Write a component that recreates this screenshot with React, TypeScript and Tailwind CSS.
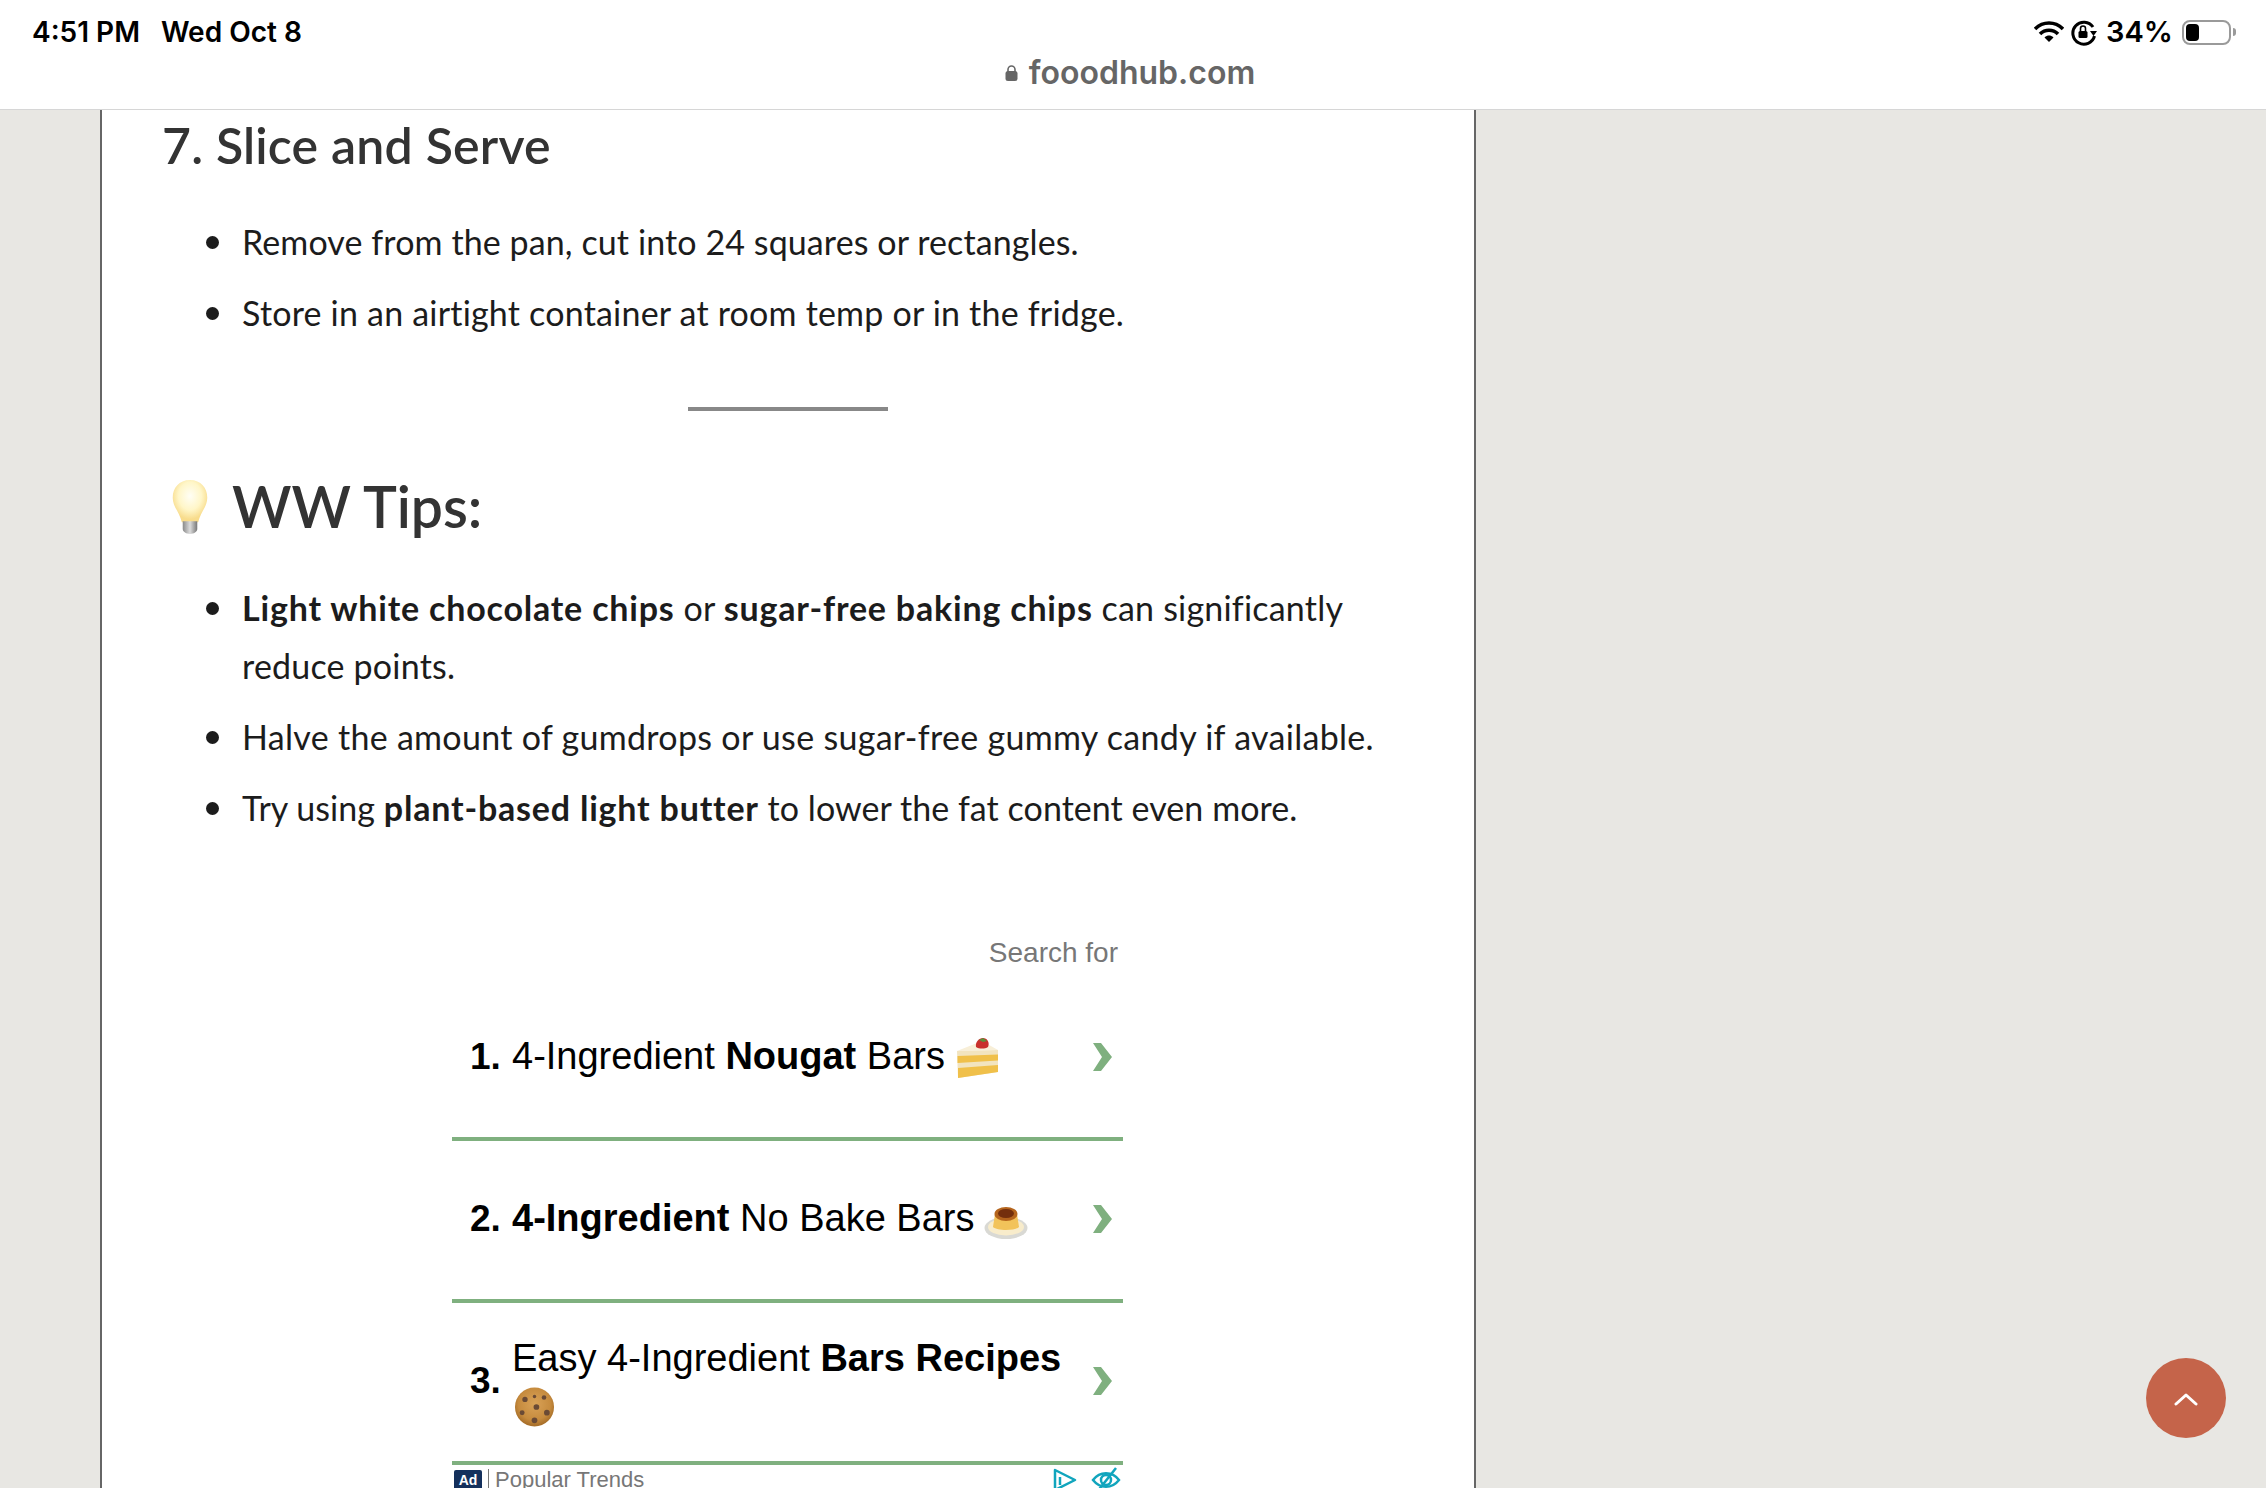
const bodyFont = "font-['Lato','Noto_Sans',sans-serif]";

// --- emoji drawings (no emoji font in the sandbox) ---
const Bulb = () => (
  <svg width="40" height="55" viewBox="0 0 44 56" preserveAspectRatio="none" className="shrink-0">
    <defs>
      <radialGradient id="glow" cx="50%" cy="38%" r="55%">
        <stop offset="0%" stopColor="#fffef5" />
        <stop offset="60%" stopColor="#fff6c8" />
        <stop offset="100%" stopColor="#f8dc8c" />
      </radialGradient>
      <linearGradient id="screw" x1="0" x2="1" y1="0" y2="0">
        <stop offset="0%" stopColor="#8a8a8a" />
        <stop offset="50%" stopColor="#dcdcdc" />
        <stop offset="100%" stopColor="#777" />
      </linearGradient>
    </defs>
    <path d="M22 1C10 1 3 9 3 19c0 9 7 14 10 25h18c3-11 10-16 10-25C41 9 34 1 22 1z" fill="url(#glow)" />
    <path d="M14 43h16v8c0 3-4 5-8 5s-8-2-8-5z" fill="url(#screw)" />
  </svg>
);

const Cake = () => (
  <svg width="44" height="40" viewBox="0 0 44 40">
    <path d="M2 13 27 3l16 9z" fill="#f8efd8" />
    <path d="M2 13 43 12v22L3 40z" fill="#f2e4bf" />
    <path d="M2.500 18 43 16.500v6L2.500 25z" fill="#f0c04a" />
    <path d="M3 30 43 27v7L3 40z" fill="#f0c04a" />
    <path d="M21 9c-1-5 3-9 7-9s7 4 5 9c-3 2-9 2-12 0z" fill="#c9302c" />
    <path d="M24 2l4-2 4 3-4 1z" fill="#5b8f3a" />
  </svg>
);

const Flan = () => (
  <svg width="44" height="32" viewBox="0 0 44 32">
    <ellipse cx="22" cy="21" rx="21.500" ry="11" fill="#d9d9d4" />
    <ellipse cx="22" cy="20" rx="18" ry="8.500" fill="#f8eccb" />
    <path d="M11 7h22l2 13c-4 4-22 4-26 0z" fill="#f2c35a" />
    <ellipse cx="22" cy="7" rx="11.500" ry="7" fill="#b5651d" />
    <ellipse cx="22" cy="6.500" rx="8" ry="4.500" fill="#742f0d" />
  </svg>
);

const Cookie = () => (
  <svg width="41" height="40" viewBox="0 0 42 42">
    <defs>
      <radialGradient id="dough" cx="50%" cy="42%" r="55%">
        <stop offset="0%" stopColor="#d9a257" />
        <stop offset="75%" stopColor="#c68b3e" />
        <stop offset="100%" stopColor="#a9702a" />
      </radialGradient>
    </defs>
    <circle cx="21" cy="21" r="20.500" fill="url(#dough)" />
    <g fill="#6a4a35">
      <circle cx="11" cy="13" r="2.800" />
      <circle cx="31" cy="11" r="2.400" />
      <circle cx="21" cy="10" r="1.800" />
      <circle cx="23" cy="21" r="3" />
      <circle cx="8" cy="27" r="2.600" />
      <circle cx="34" cy="27" r="3" />
      <circle cx="21" cy="35" r="3" />
    </g>
  </svg>
);

const Chevron = () => (
  <svg width="19" height="28" viewBox="0 0 19 28" className="shrink-0">
    <polygon points="0,0 8,0 19,14 8,28 0,28 9,14" fill="#7fb07f" />
  </svg>
);

const Row = ({ n, children }: { n: number; children: React.ReactNode }) => (
  <div className="flex items-center pl-[18px] pr-[11px] h-[155px] pb-[3px] border-b-4 border-[#7fb07f] box-content">
    <span className="font-bold text-[37px] w-[42px] shrink-0">{n}.</span>
    <div className="flex-1 text-[38px] leading-[47px] text-black">{children}</div>
    <Chevron />
  </div>
);

// マーカーのサイズを揃えるため、丸は自前で描く
const Bullet = ({ children, last, className }: { children: React.ReactNode; last?: boolean; className?: string }) => (
  <li className={`flex ${last ? "" : "mb-[13px]"} ${className ?? ""}`}>
    <span className="mt-[23px] mr-[23px] w-[13px] h-[13px] rounded-full bg-[#1c1c1c] shrink-0" />
    <span>{children}</span>
  </li>
);

const Strong = ({ children }: { children: React.ReactNode }) => (
  <b className="tracking-[0.8px]">{children}</b>
);

export default function App() {
  return (
    <div className="relative h-[1488px] overflow-hidden bg-[#e8e7e3]">
      {/* ステータスバー + URL */}
      <header className="relative h-[110px] bg-white border-b border-[#d6d6d6] font-['Inter',sans-serif]">
        <div className="flex items-start justify-between pt-[15px] pl-[32px] pr-[30px]">
          <div className="flex gap-[21px] text-[28px] font-semibold leading-[34px] text-black">
            <span>4:51 PM</span>
            <span>Wed Oct 8</span>
          </div>
          <div className="flex items-center gap-[9px]">
            <svg width="30" height="22" viewBox="0 0 30 22" className="mr-[-3px]">
              <path d="M1 8c8-8 20-8 28 0M6 13c5-5 13-5 18 0" fill="none" stroke="#000" strokeWidth="3.600" />
              <path d="M10.500 16.500c3-2.600 6-2.600 9 0L15 21z" fill="#000" />
            </svg>
            <svg width="27" height="27" viewBox="0 0 27 27">
              <path d="M23 8a11 11 0 1 0 1.500 9" fill="none" stroke="#000" strokeWidth="3" />
              <path d="M20 12h7l-3.500 5z" fill="#000" />
              <rect x="8.500" y="12" width="9" height="7" rx="1.500" fill="#000" />
              <path d="M10.500 12V9.500a2.500 2.500 0 0 1 5 0V12" fill="none" stroke="#000" strokeWidth="1.600" />
            </svg>
            <span className="text-[29px] font-semibold leading-[34px] text-black">34%</span>
            <div className="flex items-center gap-[2px]">
              <div className="w-[49px] h-[25px] rounded-[8px] border-2 border-[#9a9a9a] p-[2px]">
                <div className="w-[13px] h-full rounded-[4px] bg-black" />
              </div>
              <div className="w-[3px] h-[8px] rounded-r-full bg-[#9a9a9a]" />
            </div>
          </div>
        </div>
        <div className="absolute left-0 right-[6px] top-[54px] flex justify-center items-center gap-[11px] text-[32px] font-semibold leading-[38px] text-[#666]">
          <svg width="13" height="16" viewBox="0 0 13 16">
            <path d="M3 7V4.500a3.500 3.500 0 0 1 7 0V7" fill="none" stroke="#666" strokeWidth="1.600" />
            <rect x="0.500" y="6" width="12" height="10" rx="2.500" fill="#666" />
          </svg>
          <span>fooodhub.com</span>
        </div>
      </header>

      {/* 記事本文 */}
      <main className={`ml-[100px] w-[1376px] h-[1378px] bg-white border-x-2 border-[#666] pl-[60px] ${bodyFont}`}>
        <h3 className="pt-[6px] text-[50px] leading-[58px] font-semibold tracking-[0.2px] text-[#333]">7. Slice and Serve</h3>

        <ul className="mt-[39px] ml-[44px] text-[34px] leading-[58px] tracking-[0.2px] text-[#1c1c1c]">
          <Bullet className="tracking-[0.1px]">Remove from the pan, cut into 24 squares or rectangles.</Bullet>
          <Bullet last>Store in an airtight container at room temp or in the fridge.</Bullet>
        </ul>

        <div className="mt-[65px] ml-[526px] w-[200px] h-[4px] bg-[#888]" />

        <h2 className="mt-[60px] flex items-center gap-[22px] pl-[8px] text-[57px] leading-[70px] font-semibold text-[#333]">
          <Bulb />
          <span>WW Tips:</span>
        </h2>

        <ul className="mt-[38px] ml-[44px] w-[1180px] text-[34px] leading-[58px] tracking-[0.2px] text-[#1c1c1c]">
          <Bullet>
            <Strong>Light white chocolate chips</Strong> or <Strong>sugar-free baking chips</Strong> can significantly
            reduce points.
          </Bullet>
          <Bullet className="tracking-[0.3px]">Halve the amount of gumdrops or use sugar-free gummy candy if available.</Bullet>
          <Bullet last className="tracking-[0.05px]">
            Try using <Strong>plant-based light butter</Strong> to lower the fat content even more.
          </Bullet>
        </ul>

        {/* 広告ブロック */}
        <div className="mt-[99px] ml-[290px] w-[671px] font-['Liberation_Sans',Arial,sans-serif]">
          <p className="pb-[9px] pr-[5px] text-right text-[28px] leading-[34px] text-[#777]">Search for</p>
          <Row n={1}>
            <span className="inline-flex items-center gap-[10px]">
              <span>
                4-Ingredient <b>Nougat</b> Bars
              </span>
              <span className="mt-[2px]">
                <Cake />
              </span>
            </span>
          </Row>
          <Row n={2}>
            <span className="inline-flex items-center gap-[10px]">
              <span>
                <b>4-Ingredient</b> No Bake Bars
              </span>
              <span className="mt-[8px]">
                <Flan />
              </span>
            </span>
          </Row>
          <Row n={3}>
            <div className="mb-[5px]">
              Easy 4-Ingredient <b>Bars Recipes</b>
            </div>
            <div className="ml-[2px]">
              <Cookie />
            </div>
          </Row>
          <div className="flex items-center justify-between pl-[2px] pr-[2px] pt-[2px]">
            <div className="flex items-center gap-[6px] text-[22px] leading-[24px] text-[#777]">
              <span className="w-[28px] h-[20px] rounded-[2px] bg-[#14305c] text-white text-[14px] font-bold leading-[20px] text-center">
                Ad
              </span>
              <span className="w-px h-[22px] bg-[#777]" />
              <span>Popular Trends</span>
            </div>
            <div className="flex items-center gap-[14px]">
              <svg width="24" height="24" viewBox="0 0 24 24">
                <path d="M2 2l20 10L2 22z" fill="none" stroke="#11a5bd" strokeWidth="2.500" strokeLinejoin="round" />
                <path d="M7 9v8" stroke="#11a5bd" strokeWidth="2.500" />
              </svg>
              <svg width="30" height="26" viewBox="0 0 30 26">
                <path d="M2 13c7-9 19-9 26 0-7 9-19 9-26 0z" fill="none" stroke="#11a5bd" strokeWidth="2.500" />
                <circle cx="15" cy="13" r="5" fill="none" stroke="#11a5bd" strokeWidth="2.500" />
                <path d="M25 1 6 25" stroke="#11a5bd" strokeWidth="2.500" />
              </svg>
            </div>
          </div>
        </div>
      </main>

      {/* トップへ戻るボタン */}
      <button className="absolute left-[2146px] top-[1358px] w-[80px] h-[80px] rounded-full bg-[#c5644a] flex items-center justify-center">
        <svg width="24" height="14" viewBox="0 0 24 14" className="mt-[2px]">
          <path d="M2 12 12 3l10 9" fill="none" stroke="#fff" strokeWidth="3" strokeLinecap="round" strokeLinejoin="round" />
        </svg>
      </button>
    </div>
  );
}
